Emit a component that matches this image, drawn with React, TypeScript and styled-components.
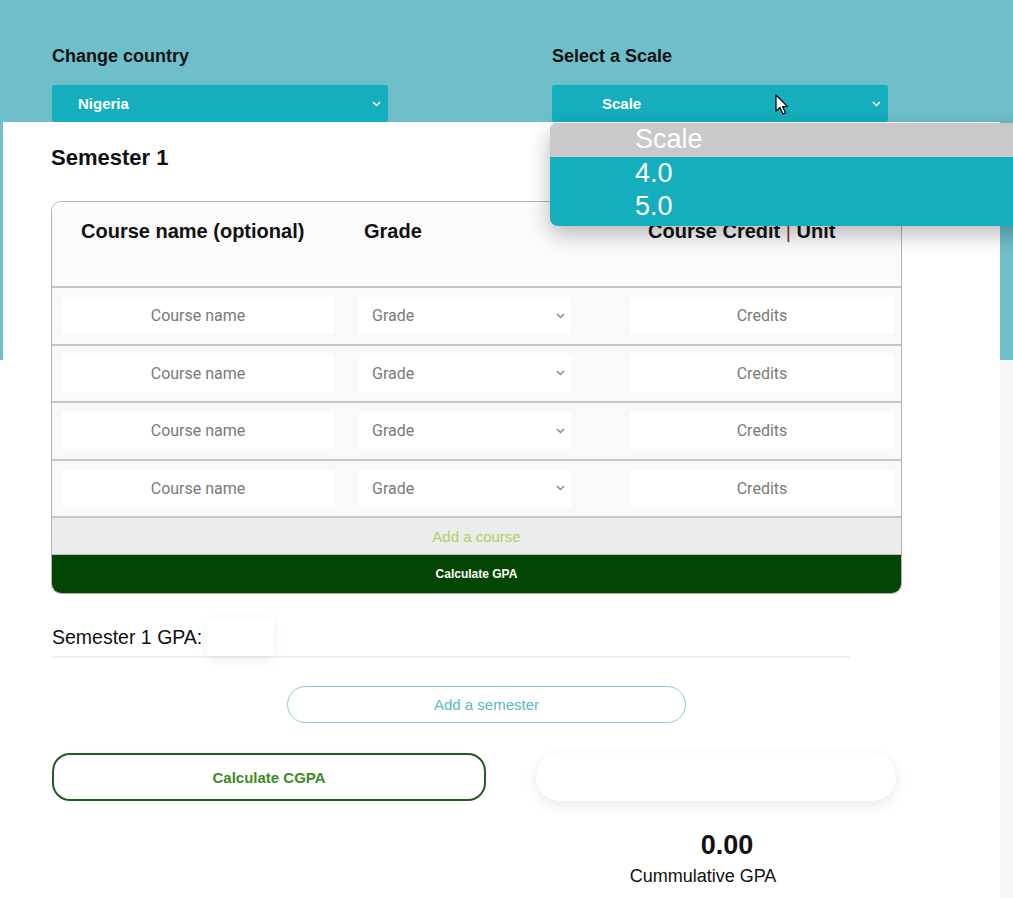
import React from "react";
import styled, { createGlobalStyle } from "styled-components";

const GlobalStyle = createGlobalStyle`
  html, body { margin: 0; padding: 0; }
  body {
    font-family: "Liberation Sans", Arial, sans-serif;
    color: #111;
    background: #fff;
    overflow: hidden;
  }
  * { box-sizing: border-box; }
`;

const Page = styled.div`
  width: 1013px;
  height: 898px;
  overflow: hidden;
  padding: 0 13px 0 3px;
  background:
    linear-gradient(#6ebfca, #6ebfca) top left / 100% 360px no-repeat,
    linear-gradient(to right, #ffffff 1000px, #f6f6f9 1000px);
  display: flex;
  flex-direction: column;
`;

const Header = styled.header`
  height: 122px;
  padding: 45px 0 0 49px;
  display: grid;
  grid-template-columns: 500px 1fr;
`;

const Field = styled.div`
  display: flex;
  flex-direction: column;
  gap: 18px;
  position: relative;
`;

const FieldLabel = styled.label`
  font-size: 18px;
  line-height: 22px;
  font-weight: 700;
  color: #111;
`;

const SelectBox = styled.div<{ $indent: number }>`
  width: 336px;
  height: 37px;
  border-radius: 3px;
  background: #14aebd;
  color: #fff;
  font-size: 15px;
  font-weight: 700;
  display: flex;
  align-items: center;
  justify-content: space-between;
  padding: 0 7px 0 ${(p) => p.$indent}px;
`;

const Dropdown = styled.ul`
  position: absolute;
  top: 78px;
  left: -2px;
  width: 480px;
  margin: 0;
  padding: 0 0 2px;
  list-style: none;
  background: #14aebd;
  border-radius: 8px 0 0 8px;
  overflow: hidden;
  box-shadow: 0 8px 22px rgba(0, 0, 0, 0.28);
  z-index: 5;
`;

const Option = styled.li<{ $muted?: boolean }>`
  height: 33.5px;
  line-height: 33.5px;
  padding-left: 85px;
  font-size: 27px;
  color: #fff;
  background: ${(p) => (p.$muted ? "#c9c9c9" : "#14aebd")};
`;

const Cursor = styled.svg`
  position: absolute;
  left: 223px;
  top: 49px;
  z-index: 6;
`;

const Card = styled.main`
  flex: 1;
  width: 997px;
  background: #fff;
  padding: 23px 0 0 48px;
  display: flex;
  flex-direction: column;
`;

const SemesterTitle = styled.h2`
  margin: 0;
  font-size: 22px;
  line-height: 26px;
  font-weight: 700;
  color: #111;
`;

const Table = styled.section`
  margin-top: 30px;
  width: 851px;
  border: 1px solid #b3b3b3;
  border-radius: 10px;
  overflow: hidden;
  display: flex;
  flex-direction: column;
`;

const HeaderRow = styled.div`
  display: grid;
  grid-template-columns: 289px 280px 1fr;
  height: 86px;
  background: #fcfbfc;
  border-bottom: 2px solid #c6c6c6;
`;

const HeadCell = styled.div<{ $indent: number }>`
  padding: 17px 0 0 ${(p) => p.$indent}px;
  font-size: 20px;
  line-height: 24px;
  font-weight: 700;
  color: #111;
  white-space: nowrap;
`;

const Bar = styled.span`
  color: #9a2a1a;
  font-weight: 400;
`;

const Row = styled.div`
  display: grid;
  grid-template-columns: 289px 280px 1fr;
  align-items: center;
  height: 57.5px;
  background: #faf9fa;
  border-bottom: 2px solid #c6c6c6;
`;

const TextInput = styled.input<{ $indent: number; $w: number }>`
  margin-left: ${(p) => p.$indent}px;
  width: ${(p) => p.$w}px;
  height: 37px;
  border: none;
  outline: none;
  background: #fff;
  text-align: center;
  font-family: Roboto, "Liberation Sans", Arial, sans-serif;
  font-size: 16px;
  color: #333;
  &::placeholder { color: #7a7a7a; }
`;

const GradeSelect = styled.div`
  margin-left: 18px;
  width: 212px;
  height: 37px;
  background: #fff;
  display: flex;
  align-items: center;
  justify-content: space-between;
  padding: 0 6px 0 13px;
  font-family: Roboto, "Liberation Sans", Arial, sans-serif;
  font-size: 16px;
  color: #7a7a7a;
`;

const AddCourse = styled.button`
  height: 37px;
  border: none;
  border-bottom: 1px solid #bdbdbd;
  background: #ececec;
  color: #a9d262;
  font-family: "Liberation Sans", Arial, sans-serif;
  font-size: 15px;
  cursor: pointer;
`;

const CalcGpa = styled.button`
  height: 38px;
  border: none;
  background: #034502;
  color: #fff;
  font-family: "Liberation Sans", Arial, sans-serif;
  font-size: 12px;
  font-weight: 700;
  cursor: pointer;
`;

const GpaRow = styled.div`
  margin-top: 24px;
  width: 799px;
  height: 40px;
  display: flex;
  align-items: center;
  gap: 5px;
  border-bottom: 2px solid #f0f0f0;
  padding-left: 1px;
`;

const GpaLabel = styled.span`
  font-size: 19.5px;
  color: #111;
`;

const GpaValue = styled.div`
  width: 67px;
  height: 38px;
  background: #fff;
  border-radius: 3px;
  box-shadow: 0 3px 12px rgba(0, 0, 0, 0.08);
`;

const AddSemester = styled.button`
  margin: 28px 0 0 236px;
  width: 399px;
  height: 37px;
  border-radius: 20px;
  border: 1px solid #80d0d8;
  background: #fff;
  color: #5bb8c4;
  font-family: "Liberation Sans", Arial, sans-serif;
  font-size: 15px;
  cursor: pointer;
`;

const BottomRow = styled.div`
  margin: 30px 0 0 1px;
  display: flex;
  gap: 50px;
`;

const CalcCgpa = styled.button`
  width: 434px;
  height: 48px;
  border-radius: 18px;
  border: 2px solid #235c23;
  background: #fff;
  color: #3d8a24;
  font-family: "Liberation Sans", Arial, sans-serif;
  font-size: 15px;
  font-weight: 700;
  cursor: pointer;
`;

const ResultPill = styled.div`
  width: 360px;
  height: 48px;
  border-radius: 24px;
  background: #fff;
  box-shadow: 0 4px 14px rgba(0, 0, 0, 0.09);
`;

const Result = styled.div`
  margin: 28px 0 0 578px;
  width: 148px;
  display: flex;
  flex-direction: column;
  gap: 4px;
  text-align: center;
`;

const ResultValue = styled.div`
  padding-left: 48px;
  font-size: 27px;
  line-height: 32px;
  font-weight: 700;
  color: #111;
`;

const ResultLabel = styled.div`
  font-size: 18px;
  line-height: 22px;
  color: #111;
  white-space: nowrap;
`;

const Chevron = ({ color }: { color: string }) => (
  <svg width="9" height="6" viewBox="0 0 9 6" aria-hidden="true">
    <polyline points="1,1 4.5,4.5 8,1" fill="none" stroke={color} strokeWidth="1.5" />
  </svg>
);

const courses = [0, 1, 2, 3];

export default function App() {
  return (
    <>
      <GlobalStyle />
      <Page>
        <Header>
          <Field>
            <FieldLabel>Change country</FieldLabel>
            <SelectBox $indent={26}>
              <span>Nigeria</span>
              <Chevron color="#fff" />
            </SelectBox>
          </Field>
          <Field>
            <FieldLabel>Select a Scale</FieldLabel>
            <SelectBox $indent={50}>
              <span>Scale</span>
              <Chevron color="#fff" />
            </SelectBox>
            <Dropdown>
              <Option $muted>Scale</Option>
              <Option>4.0</Option>
              <Option>5.0</Option>
            </Dropdown>
            <Cursor width="14" height="22" viewBox="0 0 14 22" aria-hidden="true">
              <path
                d="M1 1 L1 17 L5 13.5 L8 20 L10.5 19 L7.6 12.6 L12.5 12.6 Z"
                fill="#fff"
                stroke="#000"
                strokeWidth="1.2"
                strokeLinejoin="round"
              />
            </Cursor>
          </Field>
        </Header>
        <Card>
          <SemesterTitle>Semester 1</SemesterTitle>
          <Table>
            <HeaderRow>
              <HeadCell $indent={29}>Course name (optional)</HeadCell>
              <HeadCell $indent={23}>Grade</HeadCell>
              <HeadCell $indent={27}>
                Course Credit <Bar>|</Bar> Unit
              </HeadCell>
            </HeaderRow>
            {courses.map((i) => (
              <Row key={i}>
                <TextInput $indent={10} $w={272} placeholder="Course name" />
                <GradeSelect>
                  <span>Grade</span>
                  <Chevron color="#888" />
                </GradeSelect>
                <TextInput $indent={9} $w={264} placeholder="Credits" />
              </Row>
            ))}
            <AddCourse>Add a course</AddCourse>
            <CalcGpa>Calculate GPA</CalcGpa>
          </Table>
          <GpaRow>
            <GpaLabel>Semester 1 GPA:</GpaLabel>
            <GpaValue />
          </GpaRow>
          <AddSemester>Add a semester</AddSemester>
          <BottomRow>
            <CalcCgpa>Calculate CGPA</CalcCgpa>
            <ResultPill />
          </BottomRow>
          <Result>
            <ResultValue>0.00</ResultValue>
            <ResultLabel>Cummulative GPA</ResultLabel>
          </Result>
        </Card>
      </Page>
    </>
  );
}
